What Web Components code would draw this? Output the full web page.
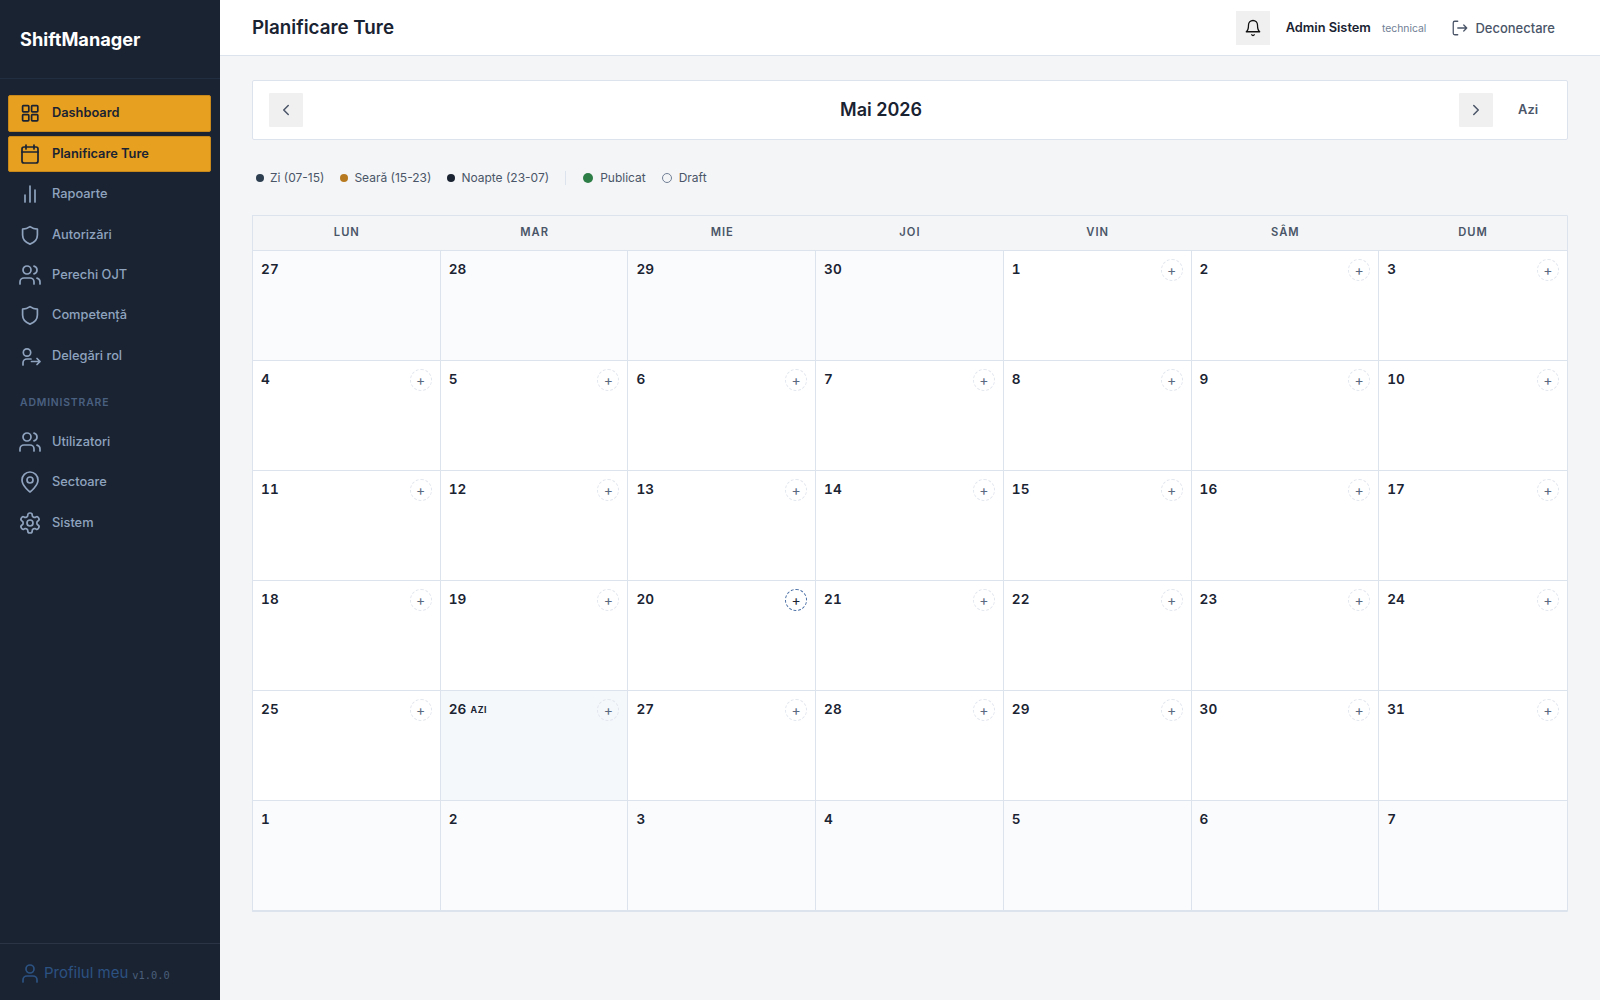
<!DOCTYPE html>
<html lang="ro">
<head>
<meta charset="utf-8">
<title>Planificare Ture</title>
<style>
  html,body{margin:0;padding:0;height:100%}
  body{font-family:Inter,"Liberation Sans",sans-serif;background:#f4f5f7;color:#1a2332}
</style>
</head>
<body>
<app-shell></app-shell>
<script>
const ICONS = {
  grid:'<rect x="4.6" y="4.6" width="6.2" height="6.2" rx=".8"/><rect x="13.6" y="4.6" width="6.2" height="6.2" rx=".8"/><rect x="4.6" y="13.6" width="6.2" height="6.2" rx=".8"/><rect x="13.6" y="13.6" width="6.2" height="6.2" rx=".8"/>',
  cal:'<rect x="4" y="5" width="16" height="16" rx="2"/><path d="M8 3v4M16 3v4M4 10h16"/>',
  bars:'<path d="M7 20v-7M12 20V4M17 20V8"/>',
  shield:'<path d="M12 3.6c2.4 1.7 4.7 2.5 7.4 2.6v5.9c0 4.4-3 7.5-7.4 9-4.4-1.5-7.4-4.6-7.4-9V6.2c2.7-.1 5-.9 7.4-2.6z"/>',
  users:'<path d="M16 21v-2a4 4 0 0 0-4-4H6a4 4 0 0 0-4 4v2"/><circle cx="9" cy="7" r="4"/><path d="M22 21v-2a4 4 0 0 0-3-3.87"/><path d="M16 3.13a4 4 0 0 1 0 7.75"/>',
  deleg:'<circle cx="9" cy="8.5" r="3.7"/><path d="M5 21v-2a4 4 0 0 1 4-4h4"/><path d="M13.5 17.5H22M19 14.5l3 3-3 3"/>',
  pin:'<path d="M20 10c0 6-8 12-8 12s-8-6-8-12a8 8 0 0 1 16 0z"/><circle cx="12" cy="10" r="3"/>',
  gear:'<path d="M12.22 2h-.44a2 2 0 0 0-2 2v.18a2 2 0 0 1-1 1.73l-.43.25a2 2 0 0 1-2 0l-.15-.08a2 2 0 0 0-2.73.73l-.22.38a2 2 0 0 0 .73 2.73l.15.1a2 2 0 0 1 1 1.72v.51a2 2 0 0 1-1 1.74l-.15.09a2 2 0 0 0-.73 2.73l.22.38a2 2 0 0 0 2.73.73l.15-.08a2 2 0 0 1 2 0l.43.25a2 2 0 0 1 1 1.73V20a2 2 0 0 0 2 2h.44a2 2 0 0 0 2-2v-.18a2 2 0 0 1 1-1.73l.43-.25a2 2 0 0 1 2 0l.15.08a2 2 0 0 0 2.73-.73l.22-.39a2 2 0 0 0-.73-2.73l-.15-.08a2 2 0 0 1-1-1.74v-.5a2 2 0 0 1 1-1.74l.15-.09a2 2 0 0 0 .73-2.73l-.22-.38a2 2 0 0 0-2.73-.73l-.15.08a2 2 0 0 1-2 0l-.43-.25a2 2 0 0 1-1-1.73V4a2 2 0 0 0-2-2z"/><circle cx="12" cy="12" r="3"/>',
  user:'<circle cx="12" cy="8" r="4"/><path d="M5 21v-2a4 4 0 0 1 4-4h6a4 4 0 0 1 4 4v2"/>',
  bell:'<path d="M6 8a6 6 0 0 1 12 0c0 7 3 9 3 9H3s3-2 3-9"/><path d="M10.3 21a1.94 1.94 0 0 0 3.4 0"/>',
  logout:'<path d="M9 3H5a2 2 0 0 0-2 2v14a2 2 0 0 0 2 2h4"/><path d="M9 12h12M17 8l4 4-4 4"/>',
  left:'<path d="M15 18l-6-6 6-6"/>',
  right:'<path d="M9 18l6-6-6-6"/>'
};
const svg=(n,s=24,w=1.7)=>`<svg width="${s}" height="${s}" viewBox="0 0 24 24" fill="none" stroke="currentColor" stroke-width="${w}" stroke-linecap="round" stroke-linejoin="round">${ICONS[n]}</svg>`;

class Base extends HTMLElement{
  constructor(){super();this.attachShadow({mode:'open'});}
}
class NavItem extends Base{
  connectedCallback(){
    const on=this.hasAttribute('active');
    this.shadowRoot.innerHTML=`<style>
      :host{display:flex;align-items:center;gap:10px;height:36.4px;box-sizing:border-box;padding:0 9px;margin-bottom:4px;border-radius:2px;
        font:${on?600:500} 12.8px/20px Inter,sans-serif;color:${on?'#1a2332':'#8fa3bf'};
        background:${on?'#e8a020':'transparent'};border:1px solid ${on?'#c9891a':'transparent'};}
      svg{display:block;flex:none}
    </style>${svg(this.getAttribute('icon'))}<slot></slot>`;
  }
}
class AppSidebar extends Base{
  connectedCallback(){
    this.shadowRoot.innerHTML=`<style>
      :host{display:flex;flex-direction:column;width:220px;flex:none;height:1000px;background:#1a2332;box-sizing:border-box;}
      .logo{height:79px;box-sizing:border-box;border-bottom:1px solid #212d40;padding:26px 20px 0;font:700 18.2px/26px Inter,sans-serif;color:#fff;}
      nav{flex:1;padding:16.3px 9px 0 8px}
      .sec{font:600 10.4px/16px Inter,sans-serif;letter-spacing:.83px;color:#4a6080;padding:0 12px;margin:21px 0 12.7px;}
      .foot{border-top:1px solid #2a3444;height:57px;box-sizing:border-box;padding:2px 18px 0;display:flex;align-items:center;color:#2c5282;}
      .foot span{font:400 15px/24px Inter,sans-serif;margin-left:2px}
      .foot code{font:400 10.4px/16px "DejaVu Sans Mono",monospace;color:#4a5f7a;margin-left:4px;position:relative;top:2px}
      svg{display:block;flex:none}
    </style>
    <div class="logo">ShiftManager</div>
    <nav>
      <nav-item icon="grid" active>Dashboard</nav-item>
      <nav-item icon="cal" active>Planificare Ture</nav-item>
      <nav-item icon="bars">Rapoarte</nav-item>
      <nav-item icon="shield">Autorizări</nav-item>
      <nav-item icon="users">Perechi OJT</nav-item>
      <nav-item icon="shield">Competență</nav-item>
      <nav-item icon="deleg">Delegări rol</nav-item>
      <div class="sec">ADMINISTRARE</div>
      <nav-item icon="users">Utilizatori</nav-item>
      <nav-item icon="pin">Sectoare</nav-item>
      <nav-item icon="gear">Sistem</nav-item>
    </nav>
    <div class="foot">${svg('user')}<span>Profilul meu</span><code>v1.0.0</code></div>`;
  }
}
class AppHeader extends Base{
  connectedCallback(){
    this.shadowRoot.innerHTML=`<style>
      :host{display:flex;align-items:center;height:56px;box-sizing:border-box;background:#fff;border-bottom:1px solid #dde3ed;padding:0 45px 0 32px;}
      h1{margin:0;flex:1;font:600 18.8px/28px Inter,sans-serif;color:#1a2332;padding-top:1px}
      .bell{width:34px;height:34px;background:#f0f0f0;display:flex;align-items:center;justify-content:center;color:#111;margin-right:16px}
      .name{font:600 12.8px/20px Inter,sans-serif;color:#1a2332;margin-right:11px}
      .role{font:400 10.4px/16px Inter,sans-serif;color:#718096;margin-right:25px;position:relative;top:1px}
      .out{display:flex;align-items:center;gap:6px;font:500 13px/20px Inter,sans-serif;color:#4a5568}
      svg{display:block}
    </style>
    <h1>Planificare Ture</h1>
    <div class="bell">${svg('bell',18,1.7)}</div>
    <span class="name">Admin Sistem</span><span class="role">technical</span>
    <div class="out">${svg('logout',18,1.7)}<span>Deconectare</span></div>`;
  }
}
class CalToolbar extends Base{
  connectedCallback(){
    this.shadowRoot.innerHTML=`<style>
      :host{display:flex;align-items:center;justify-content:space-between;height:60px;box-sizing:border-box;background:#fff;border:1px solid #dde3ed;border-radius:2px;padding:0 16px;}
      .b{width:34px;height:34px;background:#f0f0f0;border-radius:1px;display:flex;align-items:center;justify-content:center;color:#4a5568}
      h2{margin:0;font:600 18px/26px Inter,sans-serif;color:#1a2332}
      .r{display:flex;align-items:center;gap:12px}
      .azi{font:600 12.8px/20px Inter,sans-serif;color:#4a5568;padding:0 13px}
      svg{display:block}
    </style>
    <div class="b">${svg('left',18,2)}</div>
    <h2>Mai 2026</h2>
    <div class="r"><div class="b">${svg('right',18,2)}</div><div class="azi">Azi</div></div>`;
  }
}
class LegendItem extends Base{
  connectedCallback(){
    const s=+this.getAttribute('size')||8, c=this.getAttribute('color'), o=this.hasAttribute('outline');
    this.shadowRoot.innerHTML=`<style>
      :host{display:flex;align-items:center;gap:${s>8?7:6}px;font:400 12px/18px Inter,sans-serif;color:#4a5568}
      i{display:block;box-sizing:border-box;width:${s}px;height:${s}px;border-radius:50%;background:${o?'transparent':c};border:${o?'1.5px solid '+c:'none'}}
    </style><i></i><slot></slot>`;
  }
}
class CalLegend extends Base{
  connectedCallback(){
    this.shadowRoot.innerHTML=`<style>
      :host{display:flex;align-items:center;gap:16px;padding:0 4px;height:14px;margin:31px 0 30px}
      .sep{width:1px;height:14px;background:#dde3ed;margin-right:1px}
    </style>
    <legend-item color="#2c3e50">Zi (07-15)</legend-item>
    <legend-item color="#b7791f">Seară (15-23)</legend-item>
    <legend-item color="#1a2332">Noapte (23-07)</legend-item>
    <div class="sep"></div>
    <legend-item size="10" color="#2d7d46">Publicat</legend-item>
    <legend-item size="10" color="#718096" outline>Draft</legend-item>`;
  }
}
class CalCell extends Base{
  connectedCallback(){
    const out=this.hasAttribute('out'), today=this.hasAttribute('today'), hot=this.hasAttribute('hot');
    const bg=out?'#fafbfc':today?'#f4f8fb':'#fff';
    this.shadowRoot.innerHTML=`<style>
      :host{display:block;box-sizing:border-box;height:110px;background:${bg};border-right:1px solid #dde3ed;border-bottom:1px solid #dde3ed;padding:8px;position:relative}
      .top{display:flex;align-items:flex-start;justify-content:space-between}
      .n{font:600 13.6px/21px Inter,sans-serif;font-variant-numeric:tabular-nums;letter-spacing:.1px;color:#1a2332;display:flex;align-items:center;gap:4px}
      .t{font:700 8.8px/12px Inter,sans-serif;letter-spacing:.6px;color:#1a2332;position:relative;top:.5px}
      .p{box-sizing:border-box;width:22px;height:22px;border-radius:50%;border:1.5px dashed ${hot?'#4a6fa5':'#e2e6ee'};display:flex;align-items:center;justify-content:center;
         font:400 14px/14px Inter,sans-serif;color:${hot?'#1a2332':'#5a6a80'}}
    </style>
    <div class="top"><div class="n"><slot></slot>${today?'<span class="t">AZI</span>':''}</div>${out?'':'<div class="p">+</div>'}</div>`;
  }
}
class CalGrid extends Base{
  connectedCallback(){
    const days=[];
    [27,28,29,30].forEach(d=>days.push([d,1]));
    for(let d=1;d<=31;d++)days.push([d,0]);
    for(let d=1;d<=7;d++)days.push([d,1]);
    const cells=days.map(([d,o])=>`<cal-cell ${o?'out':''} ${(!o&&d===26)?'today':''} ${(!o&&d===20)?'hot':''}>${d}</cal-cell>`).join('');
    const heads=['LUN','MAR','MIE','JOI','VIN','SÂM','DUM'].map(h=>`<div class="h">${h}</div>`).join('');
    this.shadowRoot.innerHTML=`<style>
      :host{display:grid;grid-template-columns:repeat(6,187.71px) minmax(0,1fr);border-left:1px solid #dde3ed;border-top:1px solid #dde3ed;border-bottom:1px solid #dde3ed;border-radius:1px;}
      .h{height:35px;box-sizing:border-box;border-bottom:1px solid #dde3ed;padding-bottom:2px;display:flex;align-items:center;justify-content:center;font:600 11.2px/18px Inter,sans-serif;letter-spacing:1px;color:#4a5568}
      .h:nth-child(8){border-right:1px solid #dde3ed}
    </style>${heads}${cells}`;
  }
}
class AppShell extends Base{
  connectedCallback(){
    this.shadowRoot.innerHTML=`<style>
      :host{display:flex;width:100%;min-height:1000px}
      .main{flex:1;min-width:0;display:flex;flex-direction:column}
      .content{padding:24px 32px}
    </style>
    <app-sidebar></app-sidebar>
    <div class="main">
      <app-header></app-header>
      <div class="content">
        <cal-toolbar></cal-toolbar>
        <cal-legend></cal-legend>
        <cal-grid></cal-grid>
      </div>
    </div>`;
  }
}
customElements.define('nav-item',NavItem);
customElements.define('app-sidebar',AppSidebar);
customElements.define('app-header',AppHeader);
customElements.define('cal-toolbar',CalToolbar);
customElements.define('legend-item',LegendItem);
customElements.define('cal-legend',CalLegend);
customElements.define('cal-cell',CalCell);
customElements.define('cal-grid',CalGrid);
customElements.define('app-shell',AppShell);
</script>
</body>
</html>
